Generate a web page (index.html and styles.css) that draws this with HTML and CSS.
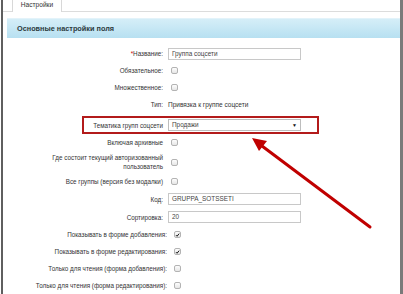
FILE: index.html
```html
<!DOCTYPE html>
<html lang="ru">
<head>
<meta charset="utf-8">
<link rel="stylesheet" href="styles.css">
</head>
<body>
<div class="frame">
  <div class="tabs">
    <div class="tab">Настройки</div>
  </div>
  <div class="panel">Основные настройки поля</div>
  <div class="form">
    <div class="row"><div class="label"><span class="req">*</span>Название:</div><div class="ctrl"><div class="input">Группа соцсети</div></div></div>
    <div class="row"><div class="label">Обязательное:</div><div class="ctrl"><span class="cb"></span></div></div>
    <div class="row"><div class="label">Множественное:</div><div class="ctrl"><span class="cb"></span></div></div>
    <div class="row"><div class="label">Тип:</div><div class="ctrl text">Привязка к группе соцсети</div></div>
    <div class="row hl"><div class="label">Тематика групп соцсети</div><div class="ctrl"><div class="input select">Продажи<span class="caret">▼</span></div></div></div>
    <div class="row"><div class="label">Включая архивные</div><div class="ctrl"><span class="cb"></span></div></div>
    <div class="row two"><div class="label">Где состоит текущий авторизованный пользователь</div><div class="ctrl"><span class="cb"></span></div></div>
    <div class="row"><div class="label">Все группы (версия без модалки)</div><div class="ctrl"><span class="cb"></span></div></div>
    <div class="row tall"><div class="label">Код:</div><div class="ctrl"><div class="input">GRUPPA_SOTSSETI</div></div></div>
    <div class="row tall"><div class="label">Сортировка:</div><div class="ctrl"><div class="input">20</div></div></div>
    <div class="row"><div class="label wide">Показывать в форме добавления:</div><div class="ctrl"><span class="cb on"><svg viewBox="0 0 8 8"><path d="M1.5 4.2 L3.3 6 L6.6 1.8" fill="none" stroke="#111" stroke-width="1.6"/></svg></span></div></div>
    <div class="row"><div class="label wide">Показывать в форме редактирования:</div><div class="ctrl"><span class="cb on"><svg viewBox="0 0 8 8"><path d="M1.5 4.2 L3.3 6 L6.6 1.8" fill="none" stroke="#111" stroke-width="1.6"/></svg></span></div></div>
    <div class="row"><div class="label wide">Только для чтения (форма добавления):</div><div class="ctrl"><span class="cb"></span></div></div>
    <div class="row"><div class="label wide">Только для чтения (форма редактирования):</div><div class="ctrl"><span class="cb"></span></div></div>
  </div>
  <svg class="arrow" width="403" height="294" viewBox="0 0 403 294">
    <line x1="370" y1="227" x2="262" y2="146" stroke="#c00000" stroke-width="3" stroke-linecap="round"/>
    <polygon points="252,138 267,141 259,151" fill="#c00000"/>
  </svg>
</div>
</body>
</html>
```
FILE: styles.css
```css
html, body {
  margin: 0;
  padding: 0;
  background: #fff;
}
body {
  font-family: "Liberation Sans", Arial, sans-serif;
  font-size: 6.5px;
  color: #333;
  width: 403px;
  height: 294px;
  overflow: hidden;
}
.frame {
  position: relative;
  margin-left: 1px;
  width: 397px;
  height: 294px;
  border-left: 2px solid #5f5f5f;
  border-right: 3px solid #7a7a7a;
}
.tabs {
  height: 11px;
  border-bottom: 1px solid #dcdcdc;
  display: flex;
  padding-left: 9px;
}
.tab {
  width: 50px;
  height: 12px;
  box-sizing: border-box;
  border-left: 1px solid #d8d8d8;
  border-right: 1px solid #d8d8d8;
  background: #fff;
  text-align: center;
  font-size: 6.6px;
  line-height: 10px;
  color: #333;
}
.panel {
  margin-top: 6px;
  margin-left: 4px;
  height: 20px;
  line-height: 20px;
  padding-left: 10px;
  background: linear-gradient(#d5eef8, #b7e0f1);
  border-top: 1px solid #e3f3fa;
  box-sizing: border-box;
  font-weight: bold;
  font-size: 7.3px;
  color: #2c3a40;
}
.form {
  padding-top: 7px;
}
.row {
  display: flex;
  align-items: center;
  height: 17px;
}
.row.two { height: 22px; }
.row.tall { height: 18px; }
.label {
  width: 160px;
  text-align: right;
  color: #333;
  line-height: 9px;
  font-size: 6.3px;
}
.label.wide {
  width: 164px;
}
.label.wide + .ctrl { margin-left: 4px; }
.row.two .label {
  padding-left: 40px;
  box-sizing: border-box;
}
.req { color: #c00; }
.ctrl {
  margin-left: 5px;
  display: flex;
  align-items: center;
}
.ctrl.text { color: #333; }
.input {
  width: 133px;
  height: 12px;
  box-sizing: border-box;
  border: 1px solid #c8c8c8;
  background: #fff;
  padding-left: 3px;
  line-height: 10px;
  font-size: 6.4px;
  color: #444;
  position: relative;
}
.select { border-color: #bdbdbd; }
.caret {
  position: absolute;
  right: 3px;
  top: 0;
  font-size: 5px;
  color: #111;
}
.cb {
  margin-left: 3px;
  width: 7px;
  height: 7px;
  box-sizing: border-box;
  border: 1px solid #b3b3b3;
  border-radius: 2px;
  background: linear-gradient(#fdfdfd, #e6e6e6);
  display: flex;
  align-items: center;
  justify-content: center;
}
.cb svg { width: 6px; height: 6px; }
.row.hl {
  margin-top: 3px;
  margin-left: 79px;
  width: 237px;
  height: 18px;
  box-sizing: border-box;
  border: 2px solid #b31b1b;
}
.row.hl .label { width: 79px; }
.arrow {
  position: absolute;
  left: -3px;
  top: 0;
  pointer-events: none;
}
```
